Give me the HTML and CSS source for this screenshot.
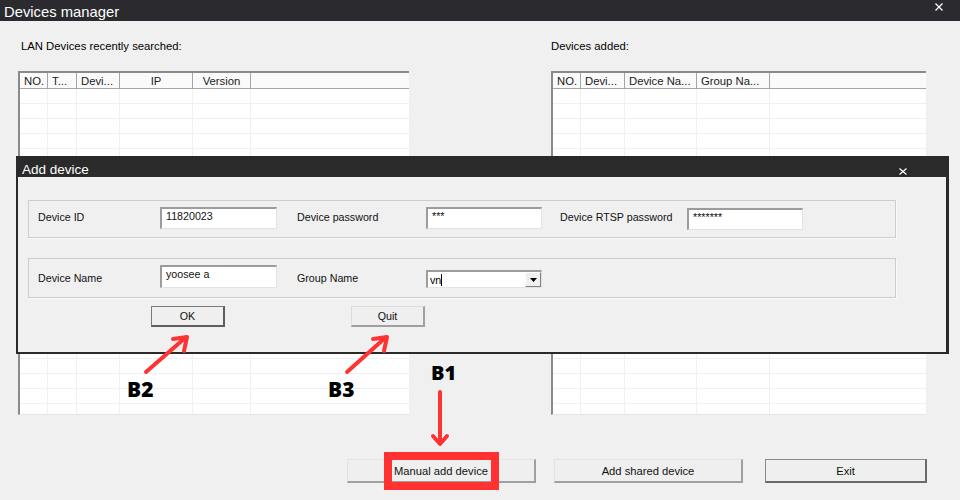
FILE: index.html
```html
<!DOCTYPE html>
<html lang="en">

<head>
    <meta charset="UTF-8">
    <title>Devices manager</title>
    <link rel="stylesheet" href="styles.css">
</head>

<body>
    <!-- FINESTRA PRINCIPALE -->
    <div class="window">
        <div class="titlebar">
            <span class="title">Devices manager</span>
            <svg class="close close-main" width="8" height="8" viewBox="0 0 8 8">
                <path d="M0.5 0.5 L7.5 7.5 M7.5 0.5 L0.5 7.5" stroke="#fff" stroke-width="1.3" />
            </svg>
        </div>

        <div class="panels">
            <!-- dispositivi LAN -->
            <section class="panel panel-lan">
                <div class="caption">LAN Devices recently searched:</div>
                <div class="list">
                    <div class="col w28"><div class="head">NO.</div><div class="cells"></div></div>
                    <div class="col w29"><div class="head">T...</div><div class="cells"></div></div>
                    <div class="col w43"><div class="head">Devi...</div><div class="cells"></div></div>
                    <div class="col w73"><div class="head center">IP</div><div class="cells"></div></div>
                    <div class="col w58"><div class="head center">Version</div><div class="cells"></div></div>
                    <div class="col rest"><div class="head"></div><div class="cells"></div></div>
                </div>
            </section>

            <!-- dispositivi aggiunti -->
            <section class="panel panel-added">
                <div class="caption">Devices added:</div>
                <div class="list">
                    <div class="col w28"><div class="head">NO.</div><div class="cells"></div></div>
                    <div class="col w44"><div class="head">Devi...</div><div class="cells"></div></div>
                    <div class="col w72"><div class="head">Device Na...</div><div class="cells"></div></div>
                    <div class="col w73"><div class="head">Group Na...</div><div class="cells"></div></div>
                    <div class="col rest"><div class="head"></div><div class="cells"></div></div>
                </div>
            </section>
        </div>

        <div class="actions">
            <button class="win-btn btn-manual">Manual add device</button>
            <button class="win-btn btn-shared">Add shared device</button>
            <button class="win-btn btn-exit">Exit</button>
        </div>
    </div>

    <!-- FINESTRA DI DIALOGO -->
    <div class="dialog">
        <div class="dialog-titlebar">
            <span class="dialog-title">Add device</span>
            <svg class="close close-dialog" width="8" height="7" viewBox="0 0 8 7">
                <path d="M0.5 0.5 L7.5 6.5 M7.5 0.5 L0.5 6.5" stroke="#fff" stroke-width="1.2" />
            </svg>
        </div>
        <div class="dialog-body">
            <div class="group group-top">
                <span class="label l1">Device ID</span>
                <div class="field f1">11820023</div>
                <span class="label l2">Device password</span>
                <div class="field f2">***</div>
                <span class="label l3">Device RTSP password</span>
                <div class="field f3">*******</div>
            </div>
            <div class="group group-bottom">
                <span class="label l1">Device Name</span>
                <div class="field f1 tall">yoosee a</div>
                <span class="label l2">Group Name</span>
                <div class="combo">
                    <span class="combo-text">vn</span><span class="caret"></span>
                    <span class="combo-arrow">
                        <svg width="7" height="4" viewBox="0 0 7 4"><path d="M0 0 H7 L3.5 4 Z" fill="#000" /></svg>
                    </span>
                </div>
            </div>
            <div class="dialog-actions">
                <button class="dlg-btn btn-ok">OK</button>
                <button class="dlg-btn btn-quit">Quit</button>
            </div>
        </div>
    </div>

    <!-- ANNOTAZIONI (frecce e riquadro rosso) -->
    <svg class="arrows" width="960" height="500" viewBox="0 0 960 500">
        <g stroke="#fe3333" stroke-width="4" stroke-linecap="round" stroke-linejoin="round" fill="none">
            <path d="M146 372 L185 338" />
            <path d="M173 339 L187 337 L184 351" />
            <path d="M347 372 L385 338" />
            <path d="M373 339 L387 337 L384 351" />
            <path d="M440 392 L440 443" />
            <path d="M433 436 L440 444 L447 436" />
        </g>
    </svg>
    <div class="marker m-b1">B1</div>
    <div class="marker m-b2">B2</div>
    <div class="marker m-b3">B3</div>
    <div class="highlight"></div>
</body>

</html>
```

FILE: styles.css
```css
/* [STILE GENERALE] */
body {
    margin: 0;
    width: 960px;
    height: 500px;
    overflow: hidden;
    background: #f0f0f0;
    font-family: 'Liberation Sans', Arial, sans-serif;
    color: #000;
    position: relative;
}

/* [FINESTRA PRINCIPALE] */
.window {
    display: flex;
    flex-direction: column;
    height: 500px;
}

.titlebar {
    height: 21px;
    background: #2b2b2f;
    display: flex;
    align-items: center;
    justify-content: space-between;
    padding: 0 17px 0 4px;
}

.title {
    color: #fff;
    font-size: 14.8px;
    line-height: 21px;
    padding-top: 3px;
}

.close-main {
    margin-top: -8px;
}

/* [PANNELLI CON LE LISTE] */
.panels {
    display: flex;
    padding: 18px 0 0 18px;
}

.panel-lan {
    width: 391px;
}

.panel-added {
    width: 375px;
    margin-left: 142px;
}

.caption {
    font-size: 11.3px;
    line-height: 14px;
    height: 14px;
}

.panel-lan .caption {
    padding-left: 3px;
}

.list {
    margin-top: 18px;
    height: 344px;
    display: flex;
    background: #fff;
    border-top: 2px solid #8a8a8a;
    border-left: 2px solid #8a8a8a;
    border-bottom: 1px solid #e6e6e6;
    box-sizing: border-box;
}

.col {
    display: flex;
    flex-direction: column;
    flex: none;
}

.w28 { width: 28px; }
.w29 { width: 29px; }
.w43 { width: 43px; }
.w44 { width: 44px; }
.w58 { width: 58px; }
.w72 { width: 72px; }
.w73 { width: 73px; }

.col.rest {
    flex: 1;
}

.head {
    height: 16px;
    box-sizing: border-box;
    background: #fafafa;
    border-bottom: 1px solid #a5a5a5;
    border-right: 1px solid #a5a5a5;
    font-size: 11.3px;
    line-height: 15px;
    padding: 1px 0 0 4px;
    white-space: nowrap;
    overflow: hidden;
    color: #1a1a1a;
}

.head.center {
    text-align: center;
    padding-left: 0;
}

.rest .head {
    border-right: none;
}

.cells {
    flex: 1;
    border-right: 1px solid #f0f0f0;
    background: repeating-linear-gradient(to bottom, #fff 0, #fff 14px, #f0f0f0 14px, #f0f0f0 15px);
}

.rest .cells {
    border-right: none;
}

/* [PULSANTI IN BASSO] */
.actions {
    display: flex;
    margin-top: 44px;
    padding-left: 347px;
}

.win-btn {
    height: 24px;
    box-sizing: border-box;
    font-family: inherit;
    font-size: 11.2px;
    color: #111;
    background: #efefef;
    border-style: solid;
    border-width: 1px 2px 2px 1px;
    border-color: #e2e2e2 #a0a0a0 #a0a0a0 #e2e2e2;
    padding: 0;
}

.btn-manual,
.btn-shared {
    width: 189px;
}

.btn-shared {
    margin-left: 18px;
}

.btn-exit {
    width: 162px;
    margin-left: 22px;
    border-color: #8a8a8a #6a6a6a #6a6a6a #8a8a8a;
}

/* [FINESTRA DI DIALOGO - sopra alla finestra principale] */
.dialog {
    position: absolute;
    left: 16px;
    top: 156px;
    width: 933px;
    height: 198px;
    box-sizing: border-box;
    border: 2px solid #2a2a2a;
    border-right-width: 3px;
    background: #f0f0f0;
}

.dialog-titlebar {
    height: 19px;
    background: #2a2a2a;
    display: flex;
    justify-content: space-between;
    padding: 0 39px 0 4px;
}

.dialog-title {
    color: #fff;
    font-size: 13.5px;
    line-height: 15px;
    padding-top: 4px;
}

.close-dialog {
    margin-top: 10px;
}

.dialog-body {
    padding: 23px 0 0 10px;
}

.group {
    width: 868px;
    box-sizing: border-box;
    border: 1px solid #cdcdcd;
    box-shadow: 1px 1px 0 #fafafa;
    display: flex;
    align-items: center;
    padding-left: 9px;
}

.group-top {
    height: 38px;
}

.group-top .label {
    margin-top: -4px;
}

.group-bottom {
    height: 40px;
    margin-top: 20px;
}

.group-bottom .label {
    margin-top: -1px;
}

.label {
    font-size: 10.7px;
    color: #111;
    flex: none;
}

.l1 { width: 122px; }
.group .l2 { width: 129px; margin-left: 20px; }
.group .l3 { width: 127px; margin-left: 18px; }

.field {
    height: 22px;
    box-sizing: border-box;
    background: #fff;
    border-style: solid;
    border-width: 2px 1px 1px 2px;
    border-color: #9c9c9c #e3e3e3 #e3e3e3 #9c9c9c;
    font-size: 10.7px;
    line-height: 12px;
    padding: 1px 0 0 4px;
    color: #111;
    flex: none;
}

.f1 { width: 117px; margin-top: -2px; }
.f2 { width: 116px; margin-top: -2px; }
.f3 { width: 116px; }

.field.tall {
    height: 23px;
    margin-top: -4px;
}

/* [MENU A TENDINA] */
.combo {
    width: 116px;
    height: 18px;
    box-sizing: border-box;
    background: #fff;
    border-style: solid;
    border-width: 2px 1px 1px 2px;
    border-color: #9c9c9c #e3e3e3 #e3e3e3 #9c9c9c;
    display: flex;
    align-items: center;
    flex: none;
    margin-top: 2px;
}

.combo-text {
    font-size: 10.7px;
    padding-left: 2px;
}

.caret {
    width: 1px;
    height: 12px;
    background: #000;
}

.combo-arrow {
    margin-left: auto;
    width: 16px;
    height: 15px;
    box-sizing: border-box;
    background: #f0f0f0;
    border-style: solid;
    border-width: 1px;
    border-color: #fff #808080 #808080 #fff;
    display: flex;
    align-items: center;
    justify-content: center;
}

.dialog-actions {
    display: flex;
    margin-top: 8px;
    padding-left: 123px;
}

.dlg-btn {
    width: 74px;
    height: 21px;
    box-sizing: border-box;
    font-family: inherit;
    font-size: 10.7px;
    color: #111;
    background: #efefef;
    border-style: solid;
    border-width: 1px 2px 2px 1px;
    border-color: #dcdcdc #a0a0a0 #a0a0a0 #dcdcdc;
    padding: 0;
}

.btn-ok {
    border-color: #7a7a7a #5e5e5e #5e5e5e #7a7a7a;
}

.btn-quit {
    margin-left: 126px;
}

/* [ANNOTAZIONI SOPRA LO SCREENSHOT] */
.arrows {
    position: absolute;
    left: 0;
    top: 0;
    pointer-events: none;
}

.marker {
    position: absolute;
    font-family: 'Open Sans', 'Lato', sans-serif;
    font-weight: 800;
    font-size: 21px;
    line-height: 1;
    color: #000;
}

.m-b1 { left: 431px; top: 363px; font-size: 20px; }
.m-b2 { left: 127px; top: 379px; }
.m-b3 { left: 328px; top: 379px; }

.highlight {
    position: absolute;
    left: 384px;
    top: 452px;
    width: 115px;
    height: 38px;
    box-sizing: border-box;
    border: 8px solid #ff3131;
}
```
